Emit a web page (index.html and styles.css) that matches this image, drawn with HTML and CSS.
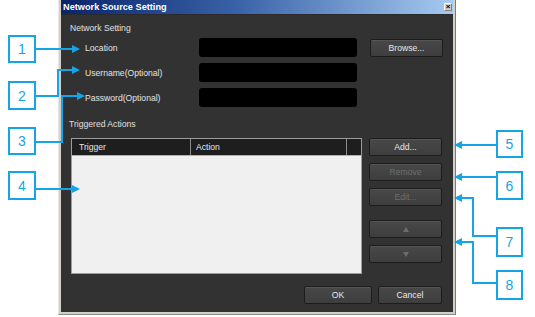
FILE: index.html
```html
<!DOCTYPE html>
<html>
<head>
<meta charset="utf-8">
<link rel="stylesheet" href="styles.css">
</head>
<body>
<div class="dialog">
  <div class="titlebar">
    <span class="title">Network Source Setting</span>
    <span class="close">×</span>
  </div>
  <div class="content">
    <div class="group-title">Network Setting</div>
    <div class="form">
      <span class="label">Location</span><span class="input"></span><button class="btn browse">Browse...</button>
      <span class="label">Username(Optional)</span><span class="input"></span><span></span>
      <span class="label">Password(Optional)</span><span class="input"></span><span></span>
    </div>
    <div class="group-title g2">Triggered Actions</div>
    <div class="actions">
      <div class="table">
        <div class="thead">
          <div class="th c1">Trigger</div>
          <div class="th c2">Action</div>
          <div class="th c3"></div>
        </div>
        <div class="tbody"></div>
      </div>
      <div class="side">
        <button class="btn">Add...</button>
        <button class="btn disabled">Remove</button>
        <button class="btn disabled">Edit...</button>
        <button class="btn disabled up"><span class="tri-up"></span></button>
        <button class="btn disabled"><span class="tri-down"></span></button>
      </div>
    </div>
    <div class="footer">
      <button class="btn ok">OK</button>
      <button class="btn cancel">Cancel</button>
    </div>
  </div>
</div>

<div class="annot">
  <svg class="lines" width="535" height="317" viewBox="0 0 535 317">
    <g fill="none" stroke="#15a4e6" stroke-width="2">
      <path d="M36 49 H73"/>
      <path d="M36 96 H58 V70 H73"/>
      <path d="M36 142 H62 V96 H78"/>
      <path d="M36 189 H73"/>
      <path d="M496 145 H461"/>
      <path d="M496 177 H461"/>
      <path d="M496 236 H473 V198 H461"/>
      <path d="M496 283 H473 V242 H461"/>
    </g>
    <g fill="#15a4e6">
      <polygon points="80,49 72,45 72,53"/>
      <polygon points="80,70 72,66 72,74"/>
      <polygon points="85,96 77,92 77,100"/>
      <polygon points="80,189 72,185 72,193"/>
      <polygon points="454,145 462,141 462,149"/>
      <polygon points="454,177 462,173 462,181"/>
      <polygon points="454,198 462,194 462,202"/>
      <polygon points="454,242 462,238 462,246"/>
    </g>
  </svg>
  <div class="num n1">1</div>
  <div class="num n2">2</div>
  <div class="num n3">3</div>
  <div class="num n4">4</div>
  <div class="num n5">5</div>
  <div class="num n6">6</div>
  <div class="num n7">7</div>
  <div class="num n8">8</div>
</div>
</body>
</html>
```

FILE: styles.css
```css
html, body {
  margin: 0;
  padding: 0;
  background: #ffffff;
}
body {
  position: relative;
  width: 535px;
  height: 317px;
  overflow: hidden;
  font-family: "Liberation Sans", Arial, sans-serif;
}

.dialog {
  margin-left: 58px;
  width: 398px;
  height: 315px;
  box-sizing: border-box;
  background: #d4d0c8;
  border-left: 1px solid #e8e8e8;
  border-right: 1px solid #7a7a7a;
  border-bottom: 1px solid #8a8a8a;
  padding: 0 2px 2px 2px;
  display: flex;
  flex-direction: column;
}

.titlebar {
  height: 14px;
  flex: none;
  background: linear-gradient(to right, #0a246a 0%, #3a62a8 45%, #a6caf0 100%);
  display: flex;
  align-items: center;
  justify-content: space-between;
  padding: 0 1px 0 2px;
}
.title {
  color: #ffffff;
  font-weight: bold;
  font-size: 9.2px;
  line-height: 14px;
  white-space: nowrap;
}
.close {
  width: 8px;
  height: 8px;
  box-sizing: border-box;
  background: #d4d0c8;
  border: 1px solid #808080;
  border-top-color: #ffffff;
  border-left-color: #ffffff;
  font-size: 8px;
  line-height: 6px;
  text-align: center;
  color: #000;
  font-weight: bold;
}

.content {
  flex: 1;
  background: #323232;
  padding: 7px 11px 0 10px;
  color: #e2e2e2;
  font-size: 8.6px;
  display: flex;
  flex-direction: column;
  border-top: 1px solid #2a2a2a;
}

.group-title {
  line-height: 12px;
  height: 12px;
  margin-left: -1px;
  color: #e0e0e0;
  white-space: nowrap;
}
.group-title.g2 {
  margin-top: 11px;
  margin-left: -2px;
}

.form {
  margin-top: 4px;
  padding-left: 14px;
  display: grid;
  grid-template-columns: 114px 158px 1fr;
  grid-auto-rows: 19px;
  row-gap: 6px;
  align-items: center;
}
.label {
  white-space: nowrap;
  color: #e4e4e4;
}
.input {
  height: 19px;
  background: #000000;
  border-radius: 3px;
}

.btn {
  font-family: "Liberation Sans", Arial, sans-serif;
  font-size: 8.6px;
  color: #e8e8e8;
  height: 18px;
  box-sizing: border-box;
  margin: 0;
  padding: 0;
  background: linear-gradient(#484848, #3e3e3e);
  border: 1px solid #1c1c1c;
  border-radius: 2px;
  box-shadow: inset 0 1px 0 #555555;
  display: flex;
  align-items: center;
  justify-content: center;
  white-space: nowrap;
}
.btn.disabled {
  color: #6e6e6e;
}
.browse {
  width: 73px;
  justify-self: end;
  margin-right: -1px;
  margin-top: 1px;
}

.actions {
  margin-top: 8px;
  height: 136px;
  display: flex;
  gap: 7px;
}
.table {
  width: 291px;
  box-sizing: border-box;
  border: 1px solid #9c9c9c;
  display: flex;
  flex-direction: column;
  background: #f0f0f0;
}
.thead {
  height: 16px;
  display: flex;
  background: #1e1e1e;
  border-bottom: 1px solid #b0b0b0;
}
.th {
  box-sizing: border-box;
  line-height: 16px;
  color: #e6e6e6;
  white-space: nowrap;
}
.c1 {
  width: 119px;
  padding-left: 7px;
  border-right: 1px solid #8c8c8c;
}
.c2 {
  width: 156px;
  padding-left: 5px;
  border-right: 1px solid #8c8c8c;
}
.c3 {
  flex: 1;
}
.tbody {
  flex: 1;
  background: #f0f0f0;
}

.side {
  width: 73px;
  display: flex;
  flex-direction: column;
  gap: 7px;
}
.side .btn {
  width: 73px;
}
.side .up {
  margin-top: 7px;
}
.tri-up, .tri-down {
  width: 0;
  height: 0;
  border-left: 3.5px solid transparent;
  border-right: 3.5px solid transparent;
}
.tri-up {
  border-bottom: 5px solid #6c6c6c;
}
.tri-down {
  border-top: 5px solid #6c6c6c;
}

.footer {
  margin-top: 12px;
  display: flex;
  justify-content: flex-end;
  gap: 6px;
}
.ok {
  width: 68px;
}
.cancel {
  width: 64px;
}

.annot {
  position: absolute;
  left: 0;
  top: 0;
  width: 535px;
  height: 317px;
  pointer-events: none;
}
.lines {
  position: absolute;
  left: 0;
  top: 0;
}
.num {
  position: absolute;
  box-sizing: border-box;
  width: 28px;
  height: 28px;
  background: #ffffff;
  border: 2px solid #15a4e6;
  color: #15a4e6;
  font-family: "Liberation Sans", Arial, sans-serif;
  font-size: 14px;
  display: flex;
  align-items: center;
  justify-content: center;
}
.n1 { left: 8px; top: 35px; }
.n2 { left: 8px; top: 81px; height: 29px; }
.n3 { left: 8px; top: 127px; }
.n4 { left: 8px; top: 171px; height: 29px; }
.n5 { left: 496px; top: 130px; width: 27px; }
.n6 { left: 496px; top: 171px; width: 27px; height: 29px; }
.n7 { left: 496px; top: 227px; width: 27px; height: 30px; }
.n8 { left: 496px; top: 270px; width: 27px; height: 30px; }
```
